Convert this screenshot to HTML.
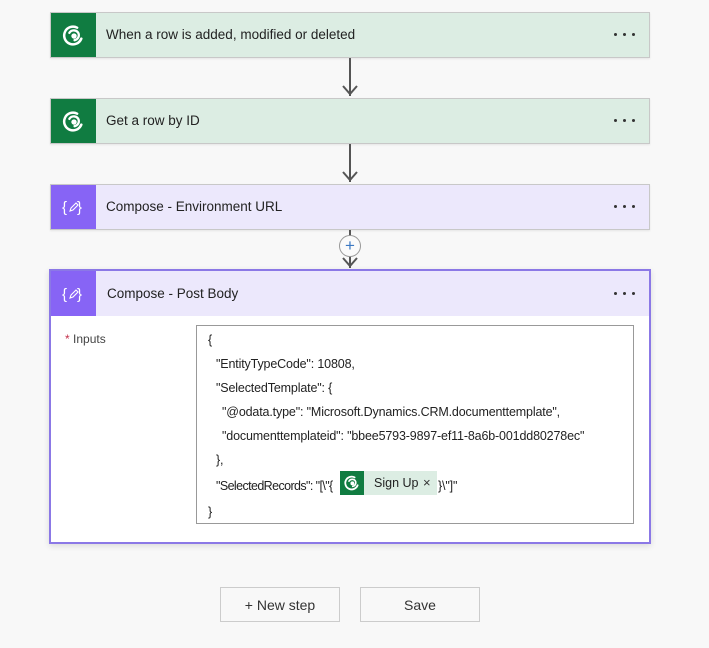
<!DOCTYPE html>
<html><head><meta charset="utf-8"><style>
*{margin:0;padding:0;box-sizing:border-box}
body{width:709px;height:648px;background:#f8f8f8;font-family:"Liberation Sans",sans-serif;position:relative;overflow:hidden;color:#222}
.card{position:absolute;left:50px;width:600px;height:46px;border:1px solid #c8c8c8;box-shadow:0 1px 2px rgba(0,0,0,.08)}
.g{background:#dcede3}
.p{background:#ece8fc}
.ic{position:absolute;left:0;top:0;width:45px;height:44px;display:flex;align-items:center;justify-content:center}
.gi{background:#107c41}
.pi{background:#8764f5}
.t{position:absolute;left:55px;top:14px;font-size:13.5px;color:#222}
.dots{position:absolute;right:14px;top:20px;display:flex;gap:6px}
.dots i{width:3px;height:3px;background:#333;border-radius:50%}
.line{position:absolute;left:349px;width:2px;background:#555}
.arr{position:absolute;left:341px;width:18px;height:18px}
.code{position:absolute;left:196px;top:325px;width:438px;height:199px;border:1px solid #999;background:#fff;font-size:12.5px;letter-spacing:-0.15px;color:#222}
.code div{position:absolute;white-space:pre}
.btn{position:absolute;top:587px;width:120px;height:35px;border:1px solid #ccc;background:#f8f8f8;font-size:14px;color:#333;display:flex;align-items:center;justify-content:center}
</style></head><body>

<svg width="0" height="0" style="position:absolute"><defs>
<g id="dv"><path d="M15.5 4.5A8.5 8.5 0 1 0 19.5 15" fill="none" stroke="#fff" stroke-width="2.4" stroke-linecap="round"/><path d="M8 9.5a5 5 0 0 1 9 1 5 5 0 0 1-4 6" fill="none" stroke="#fff" stroke-width="2.2" stroke-linecap="round"/><circle cx="12.5" cy="12.5" r="2.6" fill="#fff"/></g>
<g id="cp"><text x="1" y="16" font-size="15" fill="#fff" font-family="Liberation Sans">{</text><text x="16" y="16" font-size="15" fill="#fff" font-family="Liberation Sans">}</text><path d="M9 15l1-3 5-5 2 2-5 5z" fill="none" stroke="#fff" stroke-width="1.1"/></g>
</defs></svg>

<div class="card g" style="top:12px"><div class="ic gi"><svg width="25" height="25" viewBox="0 0 24 24"><use href="#dv"/></svg></div><div class="t">When a row is added, modified or deleted</div><div class="dots"><i></i><i></i><i></i></div></div>
<div class="line" style="top:58px;height:38px"></div>
<svg class="arr" style="top:80px" viewBox="0 0 18 18"><path d="M2 6l7 8 7-8" fill="none" stroke="#555" stroke-width="2"/></svg>

<div class="card g" style="top:98px"><div class="ic gi"><svg width="25" height="25" viewBox="0 0 24 24"><use href="#dv"/></svg></div><div class="t">Get a row by ID</div><div class="dots"><i></i><i></i><i></i></div></div>
<div class="line" style="top:144px;height:38px"></div>
<svg class="arr" style="top:166px" viewBox="0 0 18 18"><path d="M2 6l7 8 7-8" fill="none" stroke="#555" stroke-width="2"/></svg>

<div class="card p" style="top:184px"><div class="ic pi"><svg width="26" height="22" viewBox="0 0 26 22"><use href="#cp"/></svg></div><div class="t">Compose - Environment URL</div><div class="dots"><i></i><i></i><i></i></div></div>
<div class="line" style="top:230px;height:38px"></div>
<div style="position:absolute;left:339px;top:235px;width:22px;height:22px;border-radius:50%;border:1px solid #999;background:#fafafa;color:#3a78c3;font-size:17px;line-height:19px;text-align:center">+</div>
<svg class="arr" style="top:252px" viewBox="0 0 18 18"><path d="M2 6l7 8 7-8" fill="none" stroke="#555" stroke-width="2"/></svg>

<div style="position:absolute;left:49px;top:269px;width:602px;height:275px;border:2px solid #8b78e6;background:#fff;box-shadow:0 2px 6px rgba(0,0,0,.12)">
  <div style="position:absolute;left:0;top:0;width:598px;height:45px;background:#ece8fc">
    <div class="ic pi" style="height:45px"><svg width="26" height="22" viewBox="0 0 26 22"><use href="#cp"/></svg></div>
    <div class="t" style="left:56px;top:15px">Compose - Post Body</div>
    <div class="dots" style="right:14px;top:21px"><i></i><i></i><i></i></div>
  </div>
  <div style="position:absolute;left:14px;top:61px;font-size:12px;color:#444"><span style="color:#c4314b">*</span> Inputs</div>
</div>

<div class="code">
<div style="left:11px;top:7px">{</div>
<div style="left:19px;top:31px">"EntityTypeCode": 10808,</div>
<div style="left:19px;top:55px">"SelectedTemplate": {</div>
<div style="left:25px;top:79px">"@odata.type": "Microsoft.Dynamics.CRM.documenttemplate",</div>
<div style="left:25px;top:103px">"documenttemplateid": "bbee5793-9897-ef11-8a6b-001dd80278ec"</div>
<div style="left:19px;top:127px">},</div>
<div style="left:19px;top:153px;letter-spacing:-0.6px">"SelectedRecords": "[\"{</div>
<div style="left:241px;top:153px">}\"]"</div>
<div style="left:11px;top:179px">}</div>
</div>
<div style="position:absolute;left:340px;top:471px;width:97px;height:24px;background:#dcede3">
  <div style="position:absolute;left:0;top:0;width:24px;height:24px;background:#107c41;display:flex;align-items:center;justify-content:center"><svg width="18" height="18" viewBox="0 0 24 24"><use href="#dv"/></svg></div>
  <div style="position:absolute;left:34px;top:5px;font-size:12.5px;color:#222">Sign Up</div>
  <div style="position:absolute;left:83px;top:4px;font-size:13px;color:#333">×</div>
</div>

<div class="btn" style="left:220px">+ New step</div>
<div class="btn" style="left:360px">Save</div>
</body></html>
